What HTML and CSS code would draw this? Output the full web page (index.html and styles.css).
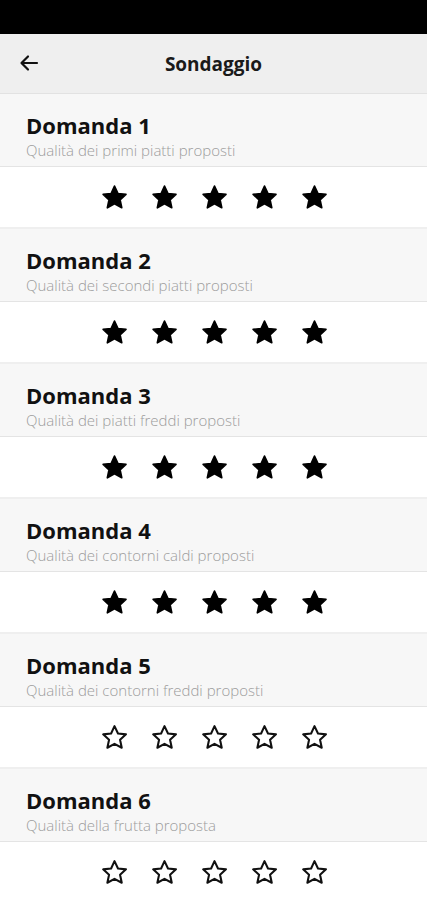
FILE: index.html
```html
<!DOCTYPE html>
<html lang="it">
<head>
    <meta charset="UTF-8">
    <meta name="viewport" content="width=device-width, initial-scale=1.0">
    <title>Sondaggio</title>
    <link rel="stylesheet" href="styles.css">
</head>
<body>
    <div class="status-bar"></div>
    <header class="top-bar">
        <button class="back" aria-label="Indietro">
            <svg width="24" height="24" viewBox="0 0 24 24"><path d="M20 12H5M11 5.5L4.5 12l6.5 6.5" fill="none" stroke="#111" stroke-width="2.2" stroke-linecap="round" stroke-linejoin="round"/></svg>
        </button>
        <h1>Sondaggio</h1>
    </header>

    <main id="survey"></main>

    <script>
        const questions = [
            { title: 'Domanda 1', text: 'Qualità dei primi piatti proposti', rating: 5 },
            { title: 'Domanda 2', text: 'Qualità dei secondi piatti proposti', rating: 5 },
            { title: 'Domanda 3', text: 'Qualità dei piatti freddi proposti', rating: 5 },
            { title: 'Domanda 4', text: 'Qualità dei contorni caldi proposti', rating: 5 },
            { title: 'Domanda 5', text: 'Qualità dei contorni freddi proposti', rating: 0 },
            { title: 'Domanda 6', text: 'Qualità della frutta proposta', rating: 0 }
        ];

        const starPath = 'M12 2.6l2.9 6.1 6.6.7-4.9 4.5 1.4 6.6L12 17.2l-5.9 3.3 1.4-6.6-4.9-4.5 6.6-.7z';

        function starSvg(filled) {
            const cls = filled ? 'star filled' : 'star';
            return `<svg class="${cls}" viewBox="0 0 24 24"><path d="${starPath}"/></svg>`;
        }

        const survey = document.getElementById('survey');
        questions.forEach(q => {
            const section = document.createElement('section');
            section.className = 'question';
            let stars = '';
            for (let i = 1; i <= 5; i++) {
                stars += starSvg(i <= q.rating);
            }
            section.innerHTML = `
                <div class="question-head">
                    <h2>${q.title}</h2>
                    <p>${q.text}</p>
                </div>
                <div class="rating">${stars}</div>`;
            survey.appendChild(section);
        });
    </script>
</body>
</html>
```

FILE: styles.css
```css
body {
    margin: 0;
    font-family: "Open Sans", "Noto Sans", sans-serif;
    background: #fff;
    color: #111;
}
.status-bar {
    height: 34px;
    background: #000;
}
.top-bar {
    height: 59px;
    display: flex;
    align-items: center;
    justify-content: center;
    position: relative;
    background: #efefef;
    border-bottom: 1px solid #e2e2e2;
}
.top-bar h1 {
    margin: 0;
    font-size: 19px;
    font-weight: 700;
    color: #1a1a1a;
}
.back {
    position: absolute;
    left: 17px;
    top: 17px;
    padding: 0;
    border: none;
    background: none;
    display: flex;
}
.question {
    border-bottom: 2px solid #efefef;
}
.question-head {
    height: 73px;
    box-sizing: border-box;
    padding: 18px 26px 0;
    background: #f7f7f7;
    border-bottom: 1px solid #e4e4e4;
}
.question-head h2 {
    margin: 0;
    font-size: 22px;
    line-height: 26px;
    font-weight: 700;
    color: #111;
}
.question-head p {
    margin: 3px 0 0;
    font-size: 15px;
    line-height: 19px;
    font-weight: 300;
    color: #9c9c9c;
}
.rating {
    height: 60px;
    display: flex;
    align-items: center;
    justify-content: center;
    gap: 21px;
    padding-left: 1px;
}
.star {
    width: 29px;
    height: 29px;
}
.star path {
    fill: none;
    stroke: #111;
    stroke-width: 1.7;
    stroke-linejoin: round;
}
.star.filled path {
    fill: #000;
    stroke: #000;
    stroke-width: 1.4;
}
```
